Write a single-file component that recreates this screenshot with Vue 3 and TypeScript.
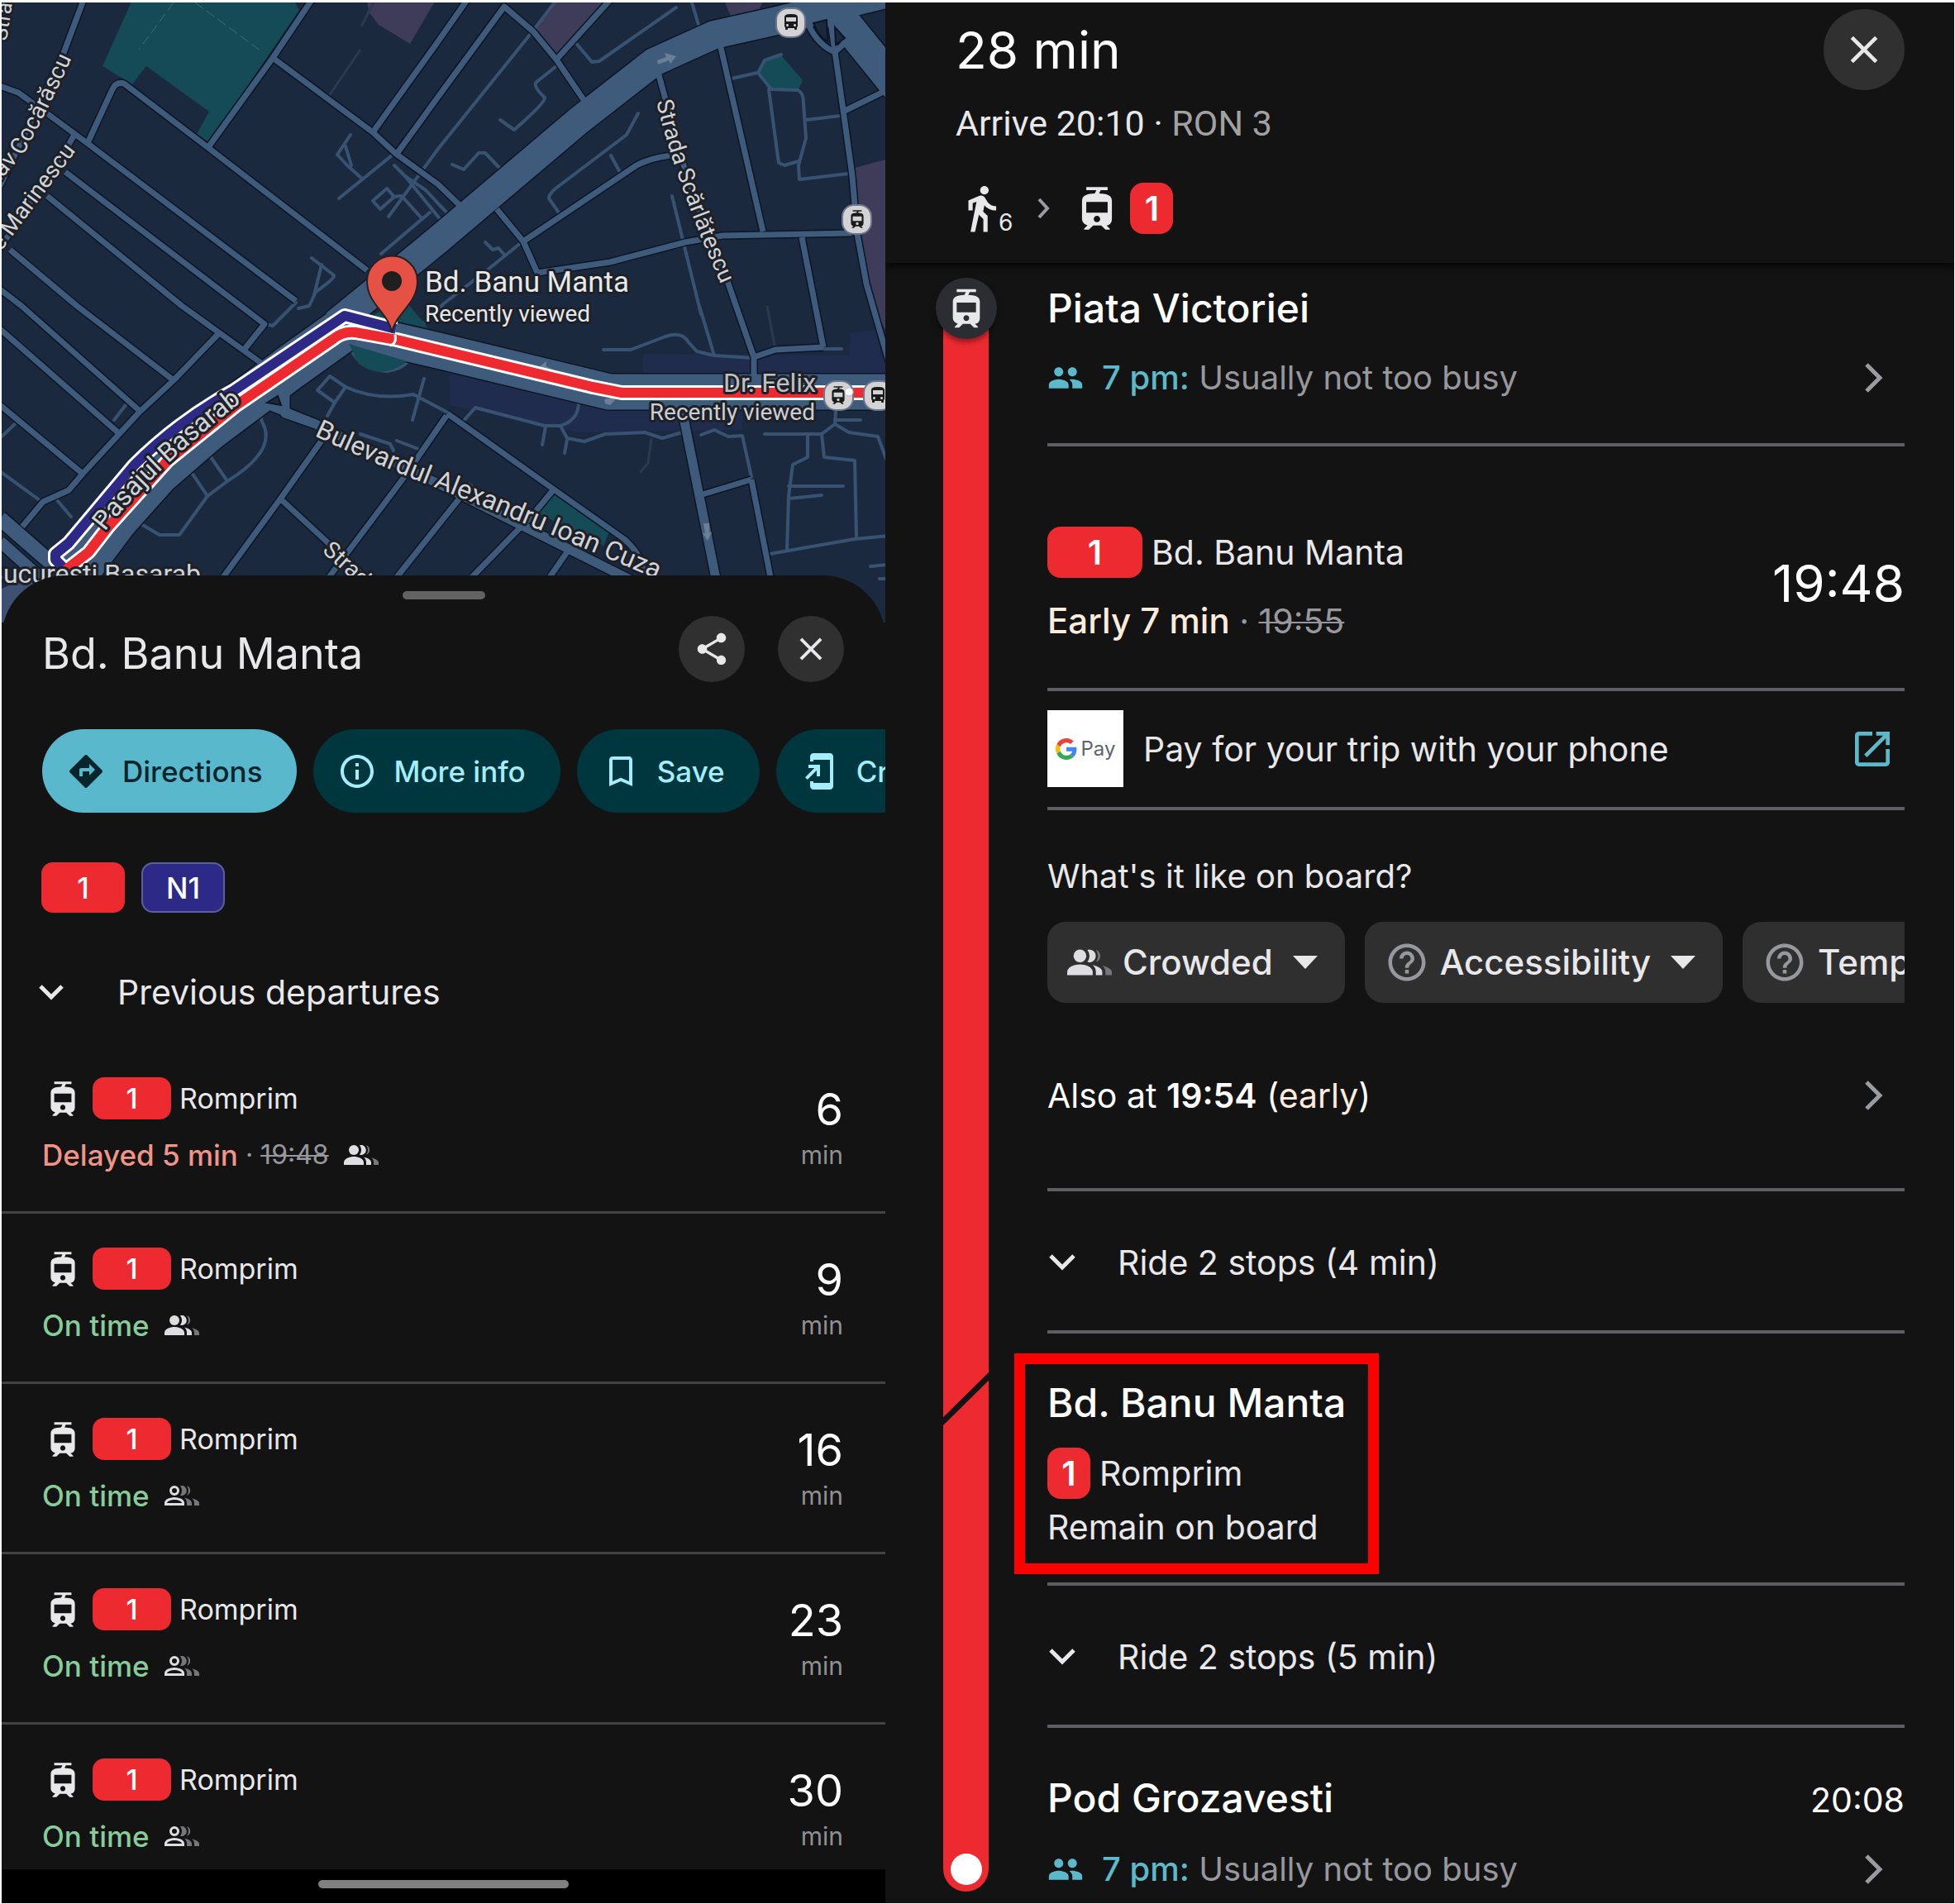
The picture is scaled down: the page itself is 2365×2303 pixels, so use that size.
<script setup lang="ts">
interface Departure {
  line: string
  headsign: string
  status: string
  late: boolean
  scheduled?: string
  crowded: boolean
  minutes: number
}

interface Action {
  label: string
  icon: string
  primary?: boolean
}

const icons = {
  tram: 'M19 16.94V8.5c0-2.79-2.61-3.4-6.01-3.49l.76-1.51H17V2H7v1.5h4.75l-.76 1.52C7.86 5.11 5 5.73 5 8.5v8.44c0 1.45 1.19 2.66 2.59 2.97L6 21.5v.5h2.23l2-2H14l2 2h2v-.5L16.5 20h-.08c1.69 0 2.58-1.37 2.58-3.06zm-7 1.56c-.83 0-1.5-.67-1.5-1.5s.67-1.5 1.5-1.5 1.5.67 1.5 1.5-.67 1.5-1.5 1.5zm5-4.5H7V9h10v5z',
  bus: 'M4 16c0 .88.39 1.67 1 2.22V20c0 .55.45 1 1 1h1c.55 0 1-.45 1-1v-1h8v1c0 .55.45 1 1 1h1c.55 0 1-.45 1-1v-1.78c.61-.55 1-1.34 1-2.22V6c0-3.5-3.58-4-8-4s-8 .5-8 4v10zm3.5 1c-.83 0-1.5-.67-1.5-1.5S6.67 14 7.500 14s1.500.67 1.500 1.500S8.330 17 7.500 17zm9 0c-.83 0-1.500-.67-1.500-1.500s.67-1.500 1.500-1.500 1.500.67 1.500 1.500-.67 1.500-1.500 1.500zm1.500-6H6V6h12v5z',
  walk: 'M13.5 5.5c1.1 0 2-.9 2-2s-.9-2-2-2-2 .9-2 2 .9 2 2 2zM9.8 8.9L7 23h2.1l1.800-8 2.100 2v6h2v-7.500l-2.100-2 .6-3C14.800 12 16.800 13 19 13v-2c-1.900 0-3.500-1-4.300-2.400l-1-1.600c-.4-.6-1-1-1.700-1-.3 0-.5.1-.8.1L6 8.300V13h2V9.600l1.800-.7',
  share: 'M18 16.08c-.76 0-1.44.3-1.96.77L8.91 12.7c.05-.23.09-.46.09-.7s-.04-.47-.09-.7l7.05-4.11c.54.5 1.25.81 2.04.81 1.66 0 3-1.34 3-3s-1.34-3-3-3-3 1.34-3 3c0 .24.04.47.09.7L8.04 9.81C7.5 9.31 6.79 9 6 9c-1.66 0-3 1.34-3 3s1.34 3 3 3c.79 0 1.5-.31 2.04-.81l7.12 4.16c-.05.21-.08.43-.08.65 0 1.61 1.31 2.92 2.92 2.92 1.61 0 2.92-1.31 2.92-2.92s-1.31-2.92-2.92-2.92z',
  close: 'M19 6.41L17.59 5 12 10.59 6.41 5 5 6.41 10.59 12 5 17.59 6.41 19 12 13.41 17.59 19 19 17.59 13.41 12z',
  directions: 'M21.71 11.29l-9-9c-.39-.39-1.02-.39-1.41 0l-9 9c-.39.39-.39 1.02 0 1.41l9 9c.39.39 1.02.39 1.41 0l9-9c.39-.38.39-1.01 0-1.41zM14 14.5V12h-4v3H8v-4c0-.55.45-1 1-1h5V7.5l3.5 3.5-3.5 3.5z',
  info: 'M11 7h2v2h-2zm0 4h2v6h-2zm1-9C6.48 2 2 6.48 2 12s4.48 10 10 10 10-4.48 10-10S17.52 2 12 2zm0 18c-4.41 0-8-3.59-8-8s3.59-8 8-8 8 3.59 8 8-3.59 8-8 8z',
  bookmark: 'M17 3H7c-1.1 0-2 .9-2 2v16l7-3 7 3V5c0-1.1-.9-2-2-2zm0 15l-5-2.18L7 18V5h10v13z',
  shortcut: 'M18 1.01L8 1c-1.1 0-2 .9-2 2v3h2V5h10v14H8v-1H6v3c0 1.1.9 2 2 2h10c1.1 0 2-.9 2-2V3c0-1.1-.9-1.99-2-1.99zM10 15h2V8H5v2h3.59L3 15.59 4.41 17 10 11.41z',
  open: 'M19 19H5V5h7V3H5c-1.11 0-2 .9-2 2v14c0 1.1.89 2 2 2h14c1.1 0 2-.9 2-2v-7h-2v7zM14 3v2h3.59l-9.83 9.83 1.41 1.41L19 6.41V10h2V3h-7z',
  help: 'M11 18h2v-2h-2v2zm1-16C6.48 2 2 6.48 2 12s4.48 10 10 10 10-4.48 10-10S17.52 2 12 2zm0 18c-4.41 0-8-3.59-8-8s3.59-8 8-8 8 3.59 8 8-3.59 8-8 8zm0-14c-2.21 0-4 1.79-4 4h2c0-1.1.9-2 2-2s2 .9 2 2c0 2-3 1.75-3 5h2c0-2.25 3-2.5 3-5 0-2.21-1.79-4-4-4z',
  people: 'M16.500 11c1.660 0 2.990-1.340 2.990-3S18.160 5 16.500 5s-3 1.340-3 3 1.340 3 3 3zm-9 0c1.660 0 2.990-1.340 2.990-3S9.160 5 7.500 5s-3 1.340-3 3 1.340 3 3 3zm0 2c-2.330 0-6.500 1.170-6.500 3.500V19h13v-2.500c0-2.330-4.170-3.500-6.500-3.500zm9 0c-.6 0-1.300.08-2 .22 1.200.84 2 1.900 2 3.280V19h6.500v-2.500c0-2.330-4.170-3.500-6.500-3.500z',
}

const actions: Action[] = [
  { label: 'Directions', icon: icons.directions, primary: true },
  { label: 'More info', icon: icons.info },
  { label: 'Save', icon: icons.bookmark },
  { label: 'Create', icon: icons.shortcut },
]

const departures: Departure[] = [
  { line: '1', headsign: 'Romprim', status: 'Delayed 5 min', late: true, scheduled: '19:48', crowded: true, minutes: 6 },
  { line: '1', headsign: 'Romprim', status: 'On time', late: false, crowded: true, minutes: 9 },
  { line: '1', headsign: 'Romprim', status: 'On time', late: false, crowded: false, minutes: 16 },
  { line: '1', headsign: 'Romprim', status: 'On time', late: false, crowded: false, minutes: 23 },
  { line: '1', headsign: 'Romprim', status: 'On time', late: false, crowded: false, minutes: 30 },
]

// Streets with a dark casing
const streets = [
  'M101 0L77 64L0 225',
  'M0 104L22 112L58 138L108 175L358 364',
  'M106 173L135 110Q140 98 150 101L251 178L444 327',
  'M377 0L330 70L252 178',
  'M330 70L451 160L479 186L530 223L558 250',
  'M451 160L530 50L565 0',
  'M480 186L530 117L610 8L645 38L673 72L709 125',
  'M79 208L320 392L296 422',
  'M57 237L220 370L320 442',
  'M12 302L93 370L210 460',
  'M0 350L26 370L169 497',
  'M0 398L145 525',
  'M0 490L100 573',
  'M265 403L210 460L169 498L100 573L83 593L52 607L27 637',
  'M90 163L80 180L0 300',
  'M738 0L673 72',
  'M796 87L805 120Q825 210 881 343L912 432L912 455',
  'M912 432L938 423L996 420',
  'M970 287L996 420',
  'M1004 20L1020 133L1031 213L1037 283L1048 343L1075 437',
  'M978 30Q990 55 1010 63L1027 47',
  'M1020 135L1075 108',
  'M871 53L923 280',
  'M650 330L738 317L829 293L874 285L1030 282',
  'M601 253L633 292L650 330',
  'M633 292L770 200Q787 191 812 188',
  'M541 500L670 592L755 652Q778 672 779 695',
  'M540 503L489 577L398 698',
  'M389 533L338 605L270 698',
  'M341 605L460 715',
  'M570 585L480 698',
  'M669 593L645 622L571 698',
  'M690 662L665 698',
  'M909 580L932 698',
  'M850 598L909 580',
]

// Alleys and footways, thin and without casing
const alleys = [
  'M0 530L21 510', 'M138 508L152 490', 'M0 570L52 608', 'M69 605L86 625',
  'M846 370L864 430', 'M813 237L848 380',
  'M825 523L801 530L780 523L732 525L707 534L686 530L678 515Q700 508 700 487',
  'M560 510L575 493L659 515H678', 'M660 516L656 538', 'M686 532L683 548',
  'M730 423H763L805 407Q825 400 833 414L843 425L864 430L912 433',
  'M678 260L664 240Q664 235 672 228L758 163L772 137',
  'M739 188L752 212', 'M631 293L589 327L537 367L512 392', 'M587 293L596 302L603 300L610 308',
  'M673 0L645 37L530 180L470 262', 'M673 80L648 100Q646 106 659 118Q660 124 622 157L605 145',
  'M695 50L716 75L725 74L818 9', 'M608 207L587 185H579L561 205L547 199', 'M836 0L846 33',
  'M945 66L925 73L917 88L933 108L965 109Q972 112 972 125L975 167L966 200L967 217L1027 210',
  'M930 108L942 197L949 200L966 195', 'M885 95L916 88', 'M975 145L1017 140',
  'M399 455L384 472L405 487L418 468Z', 'M418 468Q455 485 500 477L540 498', 'M405 487L396 503',
  'M513 458L499 508', 'M324 495Q312 503 318 512Q335 545 275 582L251 600L217 647H193L164 630',
  'M251 547L275 582', 'M226 563L251 600', 'M436 525L472 537L476 545', 'M480 533L506 543',
  'M424 163L408 187L420 200L439 217', 'M410 240L474 188', 'M418 177L425 200',
  'M477 200L490 213L534 267', 'M490 213L515 230L545 262', 'M451 243L468 228L477 238L460 253Z',
  'M475 238L486 237L511 265', 'M461 307L520 257', 'M377 312L404 333Q406 336 382 353L374 370L361 373',
  'M389 320L380 357', 'M358 366L330 394L320 392', 'M1011 498L1010 513L994 525H925', 'M1010 508H1041',
  'M1010 513L1027 523L1062 528L1072 555', 'M977 525V553L959 562L954 600L952 665',
  'M994 525L997 553L1034 557L1036 650', 'M954 588H1020', 'M954 603L994 599',
  'M931 670L1034 652L1075 648', 'M1053 685L1075 683', 'M1064 700H1075', 'M909 577L898 527L881 528L864 520L848 526',
  'M422 415Q430 445 468 449Q485 447 494 437', 'M530 0L545 0', 'M996 422H1018',
]

const boulevards = [
  { d: 'M413 400L350 445L250 520L190 572L140 628L86 700', w: 54 },
  { d: 'M413 397L530 424L737 474H1075', w: 43 },
  { d: 'M405 392L530 290L700 146L791 75L864 42L940 25L1075 -8', w: 34 },
  { d: 'M1000 0L1085 105', w: 38 },
  { d: 'M318 487L382 513L530 585L690 665L780 710', w: 11 },
  { d: 'M345 450V500L382 513', w: 11 },
  { d: 'M826 500L866 700', w: 11 },
  { d: 'M0 627L70 688', w: 18 },
  { d: 'M0 655L50 700', w: 14 },
]

const redRoute = 'M1075 475H752L717 468L480 411L430 402Q415 400 403 410L286 490L203 557L131 637L107 668L76 692'
const blueRoute = 'M479 398L417 382L282 473Q215 510 162 563L83 657L67 670V677L80 690'
</script>

<template>
  <main class="page">
    <section class="place">
      <svg class="map" viewBox="2 3 1069 750" role="img" aria-label="Map">
        <rect width="1080" height="760" fill="#1b293f" />
        <g fill="#154a57">
          <path d="M160 0H355L362 12L253 172L238 162L253 135L177 80L160 102L124 80Z" />
          <path d="M945 67L971 97L966 108L933 110L918 88L923 73Z" />
          <path d="M671 597L737 643L730 660L650 620Z" />
        </g>
        <g fill="#3e3c58">
          <path d="M673 0H738L672 66L645 37Z" />
          <path d="M444 0H527L496 53L458 30L446 14Z" />
          <path d="M876 0H924L918 12L884 20Z" />
          <path d="M1034 203L1075 192V410L1062 380L1044 317Z" />
        </g>
        <g fill="#202c4d">
          <path d="M778 428L1027 430L1029 403L1075 397V455H778Z" />
          <path d="M544 450L735 497L898 495V520L700 523L544 490Z" />
        </g>
        <g stroke="#3f6f78" fill="none" stroke-width="1" stroke-dasharray="12 5">
          <path d="M210 3L168 60" />
          <path d="M236 3L316 62" />
        </g>
        <g stroke="#2a3a50" fill="none" stroke-width="3">
          <path d="M452 3L437 32M436 60L398 116M788 530L784 560L774 572M928 370L938 423" />
        </g>
        <g fill="none" stroke="#385371" stroke-width="4" stroke-linejoin="round" stroke-linecap="round">
          <path v-for="d in alleys" :key="d" :d="d" />
        </g>
        <g fill="none" stroke="#0c1524" stroke-linejoin="round">
          <path v-for="d in streets" :key="d" :d="d" stroke-width="10" />
          <path v-for="b in boulevards" :key="b.d" :d="b.d" :stroke-width="b.w + 3" />
        </g>
        <g fill="none" stroke="#3f5b7b" stroke-linejoin="round">
          <path v-for="d in streets" :key="d" :d="d" stroke-width="7" />
          <path v-for="b in boulevards" :key="b.d" :d="b.d" :stroke-width="b.w" />
        </g>
        <path d="M2 760V712L50 690L90 760Z" fill="#3f5173" />
        <path d="M323 487L336 479L340 490Z" fill="#1b293f" stroke="#0c1524" stroke-width="2" />
        <path d="M984 28L1000 24L1001 50Q990 44 984 28Z" fill="#1b293f" stroke="#0c1524" stroke-width="2" />
        <path d="M1010 33L1022 46L1011 54Z" fill="#1b293f" stroke="#0c1524" stroke-width="2" />
        <path d="M422 416L492 437Q462 461 434 440Z" fill="#154a57" />
        <path d="M451 382L472 368H494L518 397Z" fill="#154a57" />
        <g fill="#6b7f95">
          <path d="M795 73L806 69L804 64L818 68L811 77L809 73L796 78Z" />
          <path d="M648 447L661 437V443L672 449L660 450Z" />
          <path d="M731 483L743 480V475L744 484L738 490L732 488Z" />
          <path d="M851 633H858V644H861L856 654L850 645H853Z" />
        </g>

        <g fill="none" stroke-linejoin="round">
          <path :d="blueRoute" stroke="#fff" stroke-width="18" />
          <path :d="redRoute" stroke="#fff" stroke-width="18" />
          <path :d="blueRoute" stroke="#2c2a86" stroke-width="12" />
          <path :d="redRoute" stroke="#ee2a31" stroke-width="12" />
          <path d="M472 418Q480 416 478 405" stroke="#fff" stroke-width="3" />
        </g>

        <g class="station">
          <rect x="939" y="10" width="35" height="35" rx="14" />
          <svg x="945" y="15" width="24" height="24" viewBox="0 0 24 24"><path :d="icons.bus" /></svg>
          <rect x="1019" y="248" width="35" height="35" rx="14" />
          <svg x="1024" y="252" width="26" height="26" viewBox="0 0 24 24"><path :d="icons.tram" /></svg>
          <rect x="997" y="461" width="35" height="35" rx="14" />
          <svg x="1001" y="465" width="26" height="26" viewBox="0 0 24 24"><path :d="icons.tram" /></svg>
          <circle cx="1027" cy="474" r="5" fill="#fff" stroke="#bbb" />
          <rect x="1045" y="461" width="35" height="35" rx="14" />
          <svg x="1050" y="466" width="24" height="24" viewBox="0 0 24 24"><path :d="icons.bus" /></svg>
        </g>

        <defs>
          <path id="way-cocarascu" d="M-152 396L30 184Q54 141 87 70" />
          <path id="way-marinescu" d="M-120 470L25 272L92 182" />
          <path id="way-strada" d="M8 50L24 -60" />
          <path id="way-scarlatescu" d="M794 123Q818 225 886 375" />
          <path id="way-pasajul" d="M127 643Q195 555 340 450" />
          <path id="way-cuza" d="M380 527Q455 562 530 591T860 728" />
          <path id="way-south" d="M389 667L480 750" />
        </defs>
        <g class="street-name">
          <text font-size="28"><textPath href="#way-cocarascu" startOffset="100%" text-anchor="end">Gustav Cocărăscu</textPath></text>
          <text font-size="28"><textPath href="#way-marinescu" startOffset="100%" text-anchor="end">Vasile Marinescu</textPath></text>
          <text font-size="26"><textPath href="#way-strada">Strada</textPath></text>
          <text font-size="28"><textPath href="#way-scarlatescu">Strada Scărlătescu</textPath></text>
          <text font-size="32"><textPath href="#way-pasajul">Pasajul Basarab</textPath></text>
          <text font-size="32"><textPath href="#way-cuza">Bulevardul Alexandru Ioan Cuza</textPath></text>
          <text font-size="28"><textPath href="#way-south">Strada</textPath></text>
          <text x="243" y="705" font-size="32" text-anchor="end">București Basarab</text>
        </g>
        <g class="place-name">
          <text x="514" y="353" font-size="35">Bd. Banu Manta</text>
          <text x="514" y="389" font-size="28">Recently viewed</text>
          <text x="987" y="474" font-size="32" text-anchor="end" fill="#bfc0c3">Dr. Felix</text>
          <text x="986" y="508" font-size="28" text-anchor="end" fill="#cdced1">Recently viewed</text>
        </g>
        <path
          d="M474 402C470 378 444 368 444 340A30 30 0 0 1 505 340C505 368 479 378 474 402Z"
          fill="#e55144"
          stroke="#222"
          stroke-width="2"
        />
        <circle cx="474" cy="340" r="12" fill="#1f1f1f" />
      </svg>

      <div class="sheet">
        <span class="handle"></span>
        <header class="sheet-head">
          <h1>Bd. Banu Manta</h1>
          <button class="round" type="button" aria-label="Share">
            <svg width="46" height="46" viewBox="0 0 24 24"><path :d="icons.share" /></svg>
          </button>
          <button class="round" type="button" aria-label="Close">
            <svg width="46" height="46" viewBox="0 0 24 24"><path :d="icons.close" /></svg>
          </button>
        </header>

        <div class="actions">
          <button v-for="a in actions" :key="a.label" type="button" :class="['action', { primary: a.primary }]">
            <svg width="48" height="48" viewBox="0 0 24 24"><path :d="a.icon" /></svg>
            {{ a.label }}
          </button>
        </div>

        <div class="lines">
          <span class="badge wide">1</span>
          <span class="badge wide night">N1</span>
        </div>

        <button class="previous" type="button">
          <svg width="32" height="20" viewBox="0 0 32 20"><path d="M3 3L16 16L29 3" /></svg>
          Previous departures
        </button>

        <ul class="departures">
          <li v-for="(d, i) in departures" :key="i">
            <div class="trip">
              <div class="trip-line">
                <svg width="50" height="50" viewBox="0 0 24 24"><path :d="icons.tram" /></svg>
                <span class="badge row">{{ d.line }}</span>
                <span>{{ d.headsign }}</span>
              </div>
              <div class="trip-status">
                <span :class="d.late ? 'late' : 'ontime'">{{ d.status }}</span>
                <span v-if="d.scheduled" class="muted">&nbsp;·&nbsp;<s>{{ d.scheduled }}</s></span>
                <svg v-if="d.crowded" class="crowd" width="42" height="24" viewBox="0 0 42 24">
                  <g fill="#dedee2">
                    <circle cx="12" cy="6" r="6" />
                    <path d="M0 24V21C0 16.500 7 14 12 14S24 16.500 24 21V24Z" />
                    <path d="M19 .3A6 6 0 1 1 19 11.700A9 9 0 0 0 19 .3Z" />
                    <path d="M24 14.600C28 15.600 33 17.600 33 21V24H27V21C27 18.300 25.800 16.200 24 14.600Z" />
                  </g>
                  <g fill="#77777b">
                    <path d="M27 .3A6 6 0 0 1 27 11.700A9 9 0 0 0 27 .3Z" />
                    <path d="M33 15.200C37 16.400 42 18.200 42 21V24H36V21C36 18.600 35 16.600 33 15.200Z" />
                  </g>
                </svg>
                <svg v-else class="crowd" width="42" height="24" viewBox="0 0 42 24">
                  <g fill="none" stroke="#dedee2" stroke-width="3">
                    <circle cx="12" cy="6" r="4.500" />
                    <path d="M1.500 22.500V21C1.500 17.500 8 15.500 12 15.500S22.500 17.500 22.500 21V22.500Z" />
                  </g>
                  <g fill="#77777b">
                    <path d="M19 .3A6 6 0 1 1 19 11.700A9 9 0 0 0 19 .3Z" />
                    <path d="M27 .3A6 6 0 0 1 27 11.700A9 9 0 0 0 27 .3Z" />
                    <path d="M24 14.600C28 15.600 33 17.600 33 21V24H27V21C27 18.300 25.800 16.200 24 14.600Z" />
                    <path d="M33 15.200C37 16.400 42 18.200 42 21V24H36V21C36 18.600 35 16.600 33 15.200Z" />
                  </g>
                </svg>
              </div>
            </div>
            <div class="wait"><strong>{{ d.minutes }}</strong><span>min</span></div>
          </li>
        </ul>
      </div>
      <div class="navbar"><span></span></div>
    </section>

    <section class="route">
      <header class="route-head">
        <div class="summary">
          <h2>28 min</h2>
          <p class="arrive">Arrive 20:10 · <span>RON 3</span></p>
          <div class="steps">
            <svg width="62" height="62" viewBox="0 0 24 24"><path :d="icons.walk" /></svg>
            <small>6</small>
            <svg class="next" width="16" height="26" viewBox="0 0 16 26"><path d="M3 2L13 13L3 24" /></svg>
            <svg class="vehicle" width="62" height="62" viewBox="0 0 24 24"><path :d="icons.tram" /></svg>
            <span class="badge small">1</span>
          </div>
        </div>
        <button class="round large" type="button" aria-label="Close">
          <svg width="56" height="56" viewBox="0 0 24 24"><path :d="icons.close" /></svg>
        </button>
      </header>

      <div class="itinerary">
        <div class="rail">
          <span class="node">
            <svg width="56" height="56" viewBox="0 0 24 24"><path :d="icons.tram" /></svg>
          </span>
          <span class="end"></span>
        </div>

        <div class="legs">
          <section class="stop">
            <h3>Piata Victoriei</h3>
            <a class="busy" href="#">
              <svg width="44" height="44" viewBox="0 0 24 24"><path :d="icons.people" /></svg>
              <span><b>7 pm:</b> Usually not too busy</span>
              <svg class="chev" width="24" height="38" viewBox="0 0 24 38"><path d="M3 3L19 19L3 35" /></svg>
            </a>
          </section>

          <section class="ride">
            <div>
              <p class="with-badge"><span class="badge board">1</span>Bd. Banu Manta</p>
              <p class="early"><b>Early 7 min</b><span class="muted"> · <s>19:55</s></span></p>
            </div>
            <time>19:48</time>
          </section>

          <section>
            <a class="pay" href="#">
              <span class="gpay">
                <svg width="26" height="26" viewBox="0 0 48 48">
                  <path fill="#EA4335" d="M24 9.5c3.54 0 6.71 1.22 9.21 3.6l6.85-6.85C35.9 2.38 30.47 0 24 0 14.62 0 6.51 5.38 2.56 13.22l7.98 6.19C12.43 13.72 17.74 9.5 24 9.5z" />
                  <path fill="#4285F4" d="M46.98 24.55c0-1.57-.15-3.09-.38-4.55H24v9.02h12.94c-.58 2.96-2.26 5.48-4.78 7.18l7.73 6c4.51-4.18 7.09-10.36 7.09-17.65z" />
                  <path fill="#FBBC05" d="M10.53 28.59c-.48-1.45-.76-2.99-.76-4.59s.27-3.14.76-4.59l-7.98-6.19C.92 16.46 0 20.12 0 24c0 3.88.92 7.54 2.56 10.78l7.97-6.19z" />
                  <path fill="#34A853" d="M24 48c6.48 0 11.93-2.13 15.89-5.81l-7.73-6c-2.15 1.45-4.92 2.3-8.16 2.3-6.26 0-11.57-4.22-13.47-9.91l-7.98 6.19C6.51 42.62 14.62 48 24 48z" />
                </svg>
                Pay
              </span>
              <span>Pay for your trip with your phone</span>
              <svg class="open" width="56" height="56" viewBox="0 0 24 24"><path :d="icons.open" /></svg>
            </a>
          </section>

          <section class="board-info">
            <p class="question">What's it like on board?</p>
            <div class="filters">
              <button type="button">
                <svg class="lead" width="54" height="32" viewBox="0 0 42 24">
                  <g fill="#dedee2">
                    <circle cx="12" cy="6" r="6" />
                    <path d="M0 24V21C0 16.500 7 14 12 14S24 16.500 24 21V24Z" />
                    <path d="M19 .3A6 6 0 1 1 19 11.700A9 9 0 0 0 19 .3Z" />
                    <path d="M24 14.600C28 15.600 33 17.600 33 21V24H27V21C27 18.300 25.800 16.200 24 14.600Z" />
                  </g>
                  <g fill="#77777b">
                    <path d="M27 .3A6 6 0 0 1 27 11.700A9 9 0 0 0 27 .3Z" />
                    <path d="M33 15.200C37 16.400 42 18.200 42 21V24H36V21C36 18.600 35 16.600 33 15.200Z" />
                  </g>
                </svg>
                Crowded
                <svg class="caret" width="30" height="16" viewBox="0 0 30 16"><path d="M0 0H30L15 16Z" /></svg>
              </button>
              <button type="button">
                <svg class="lead ask" width="54" height="54" viewBox="0 0 24 24"><path :d="icons.help" /></svg>
                Accessibility
                <svg class="caret" width="30" height="16" viewBox="0 0 30 16"><path d="M0 0H30L15 16Z" /></svg>
              </button>
              <button type="button">
                <svg class="lead ask" width="54" height="54" viewBox="0 0 24 24"><path :d="icons.help" /></svg>
                Temperature
                <svg class="caret" width="30" height="16" viewBox="0 0 30 16"><path d="M0 0H30L15 16Z" /></svg>
              </button>
            </div>
            <a class="also" href="#">
              <span>Also at <b>19:54</b> (<i>early</i>)</span>
              <svg class="chev" width="24" height="38" viewBox="0 0 24 38"><path d="M3 3L19 19L3 35" /></svg>
            </a>
          </section>

          <section>
            <button class="stops" type="button">
              <svg width="36" height="24" viewBox="0 0 36 24"><path d="M4 4L18 18L32 4" /></svg>
              Ride 2 stops (4 min)
            </button>
          </section>

          <section class="transfer">
            <svg class="cut" width="55" height="66" viewBox="0 0 55 66"><path d="M-4 64L59 2" /></svg>
            <div class="marked">
              <h3>Bd. Banu Manta</h3>
              <p class="with-badge"><span class="badge small">1</span>Romprim</p>
              <p>Remain on board</p>
            </div>
          </section>

          <section>
            <button class="stops" type="button">
              <svg width="36" height="24" viewBox="0 0 36 24"><path d="M4 4L18 18L32 4" /></svg>
              Ride 2 stops (5 min)
            </button>
          </section>

          <section class="stop last">
            <h3>Pod Grozavesti <time>20:08</time></h3>
            <a class="busy" href="#">
              <svg width="44" height="44" viewBox="0 0 24 24"><path :d="icons.people" /></svg>
              <span><b>7 pm:</b> Usually not too busy</span>
              <svg class="chev" width="24" height="38" viewBox="0 0 24 38"><path d="M3 3L19 19L3 35" /></svg>
            </a>
          </section>
        </div>
      </div>
    </section>
  </main>
</template>

<style>
body {
  margin: 0;
  background: #fdfdfd;
}
</style>

<style scoped>
.page {
  display: grid;
  grid-template-columns: minmax(0, 1069fr) minmax(0, 1293fr);
  padding: 3px 1px 3px 2px;
  background: #fdfdfd;
  color: #e8e8ea;
  font: 400 41px/48px Inter, Roboto, sans-serif;
}
h1, h2, h3, p, ul {
  margin: 0;
  padding: 0;
  font-weight: 400;
}
svg {
  display: block;
  flex: none;
  fill: currentColor;
}
button {
  border: 0;
  padding: 0;
  background: none;
  color: inherit;
  font: inherit;
  text-align: left;
  white-space: nowrap;
}
a {
  color: inherit;
  text-decoration: none;
}
b {
  font-weight: 500;
}
s {
  text-decoration-thickness: 2px;
}
.muted {
  color: #97989d;
}

/* map */
.place {
  display: flex;
  flex-direction: column;
  background: #131313;
  overflow: hidden;
}
.map {
  width: 100%;
  height: auto;
}
.station rect {
  fill: #d3d3d6;
  stroke: #6f7689;
  stroke-width: 2;
}
.station path {
  fill: #1a1a1a;
}
.street-name,
.place-name {
  font-family: Roboto, sans-serif;
  fill: #d0d3d8;
  stroke: #1d2127;
  stroke-width: 6px;
  stroke-linejoin: round;
  paint-order: stroke;
}
.place-name {
  fill: #e6e8ea;
}

/* place sheet */
.sheet {
  position: relative;
  flex: 1;
  margin-top: -57px;
  padding-top: 19px;
  border-radius: 76px 76px 0 0;
  background: #131313;
}
.handle {
  display: block;
  width: 100px;
  height: 10px;
  margin: 0 auto;
  border-radius: 5px;
  background: #626262;
}
.sheet-head {
  display: flex;
  align-items: center;
  gap: 40px;
  margin: 20px 50px 0 49px;
}
.sheet-head h1 {
  flex: 1;
  padding-top: 12px;
  font-size: 52px;
  line-height: 60px;
}
.round {
  display: flex;
  align-items: center;
  justify-content: center;
  width: 80px;
  height: 80px;
  border-radius: 50%;
  background: #303030;
}
.round.large {
  width: 98px;
  height: 98px;
}
.actions {
  display: flex;
  gap: 20px;
  margin: 57px 0 0 49px;
  overflow: hidden;
}
.action {
  display: flex;
  flex: none;
  align-items: center;
  gap: 20px;
  height: 101px;
  padding: 0 42px 0 29px;
  border-radius: 51px;
  background: #00363d;
  color: #a4eefb;
  font-size: 35px;
  font-weight: 500;
}
.action.primary {
  background: #59b8cb;
  color: #06262c;
}
.lines {
  display: flex;
  gap: 20px;
  margin: 60px 0 0 48px;
}
.badge {
  display: inline-flex;
  flex: none;
  align-items: center;
  justify-content: center;
  box-sizing: border-box;
  height: 62px;
  border-radius: 16px;
  background: #ee2a31;
  color: #fff;
  font-weight: 600;
}
.badge.wide {
  width: 101px;
  height: 61px;
  border-radius: 14px;
  font-size: 35px;
  font-weight: 500;
}
.badge.night {
  border: 2px solid #5e5e9c;
  background: #2c2a86;
}
.badge.row {
  width: 95px;
  height: 51px;
  border-radius: 14px;
  font-weight: 500;
}
.badge.small {
  width: 52px;
}
.badge.board {
  width: 115px;
}
.previous {
  display: flex;
  align-items: center;
  gap: 64px;
  margin: 72px 0 0 44px;
}
.previous svg,
.stops svg {
  fill: none;
  stroke: currentColor;
  stroke-width: 5px;
}
.departures {
  margin-top: 38px;
  list-style: none;
  font-size: 34px;
}
.departures li {
  display: flex;
  justify-content: space-between;
  padding: 41px 51px 44px 49px;
  border-bottom: 3px solid #434343;
}
.departures li:last-child {
  padding-bottom: 0;
  border-bottom: 0;
}
.trip-line {
  display: flex;
  align-items: center;
  height: 51px;
}
.trip-line .badge {
  margin: 0 10px 0 11px;
}
.trip-status {
  display: flex;
  align-items: center;
  margin-top: 19px;
}
.late,
.ontime {
  font-size: 35px;
  font-weight: 500;
}
.late {
  color: #f19488;
}
.ontime {
  color: #88cc9a;
}
.trip-status .muted {
  font-size: 32px;
}
.crowd {
  margin-left: 18px;
}
.wait {
  display: flex;
  flex-direction: column;
  align-items: flex-end;
  padding-top: 8px;
}
.wait strong {
  color: #fff;
  font-size: 54px;
  font-weight: 400;
  line-height: 62px;
}
.wait span {
  color: #909094;
  font-size: 30px;
}
.navbar {
  display: flex;
  justify-content: center;
  padding: 13px 0 18px;
  background: #000;
}
.navbar span {
  width: 303px;
  height: 10px;
  border-radius: 5px;
  background: #808080;
}

/* route */
.route {
  background: #131313;
  overflow: hidden;
}
.route-head {
  display: flex;
  justify-content: space-between;
  align-items: flex-start;
  padding: 8px 60px 35px 85px;
  box-shadow: 0 4px 8px 1px #080808;
}
.summary {
  padding-top: 14px;
}
.summary h2 {
  color: #fff;
  font-size: 62px;
  line-height: 72px;
}
.arrive {
  margin-top: 28px;
  font-family: Roboto, sans-serif;
  font-size: 43px;
}
.arrive span {
  color: #a1a1a1;
}
.steps {
  display: flex;
  align-items: center;
  margin-top: 48px;
}
.steps small {
  align-self: flex-end;
  margin-left: -10px;
  font-size: 28px;
  line-height: 28px;
}
.next {
  margin: 0 26px 0 29px;
}
.next,
.chev {
  fill: none;
  stroke: #9b9ca2;
  stroke-width: 4px;
}
.chev {
  margin: 0 25px 0 auto;
  stroke-width: 5px;
}
.vehicle {
  margin-right: 9px;
}
.itinerary {
  display: grid;
  grid-template-columns: 55px minmax(0, 1fr);
  gap: 71px;
  padding: 0 60px 17px 70px;
}
.rail {
  display: flex;
  flex-direction: column;
  align-items: center;
  justify-content: space-between;
  margin: 54px 0 -3px;
  border-radius: 0 0 28px 28px;
  background: #ee2a31;
}
.node {
  display: flex;
  align-items: center;
  justify-content: center;
  width: 74px;
  height: 74px;
  margin: -36px -10px 0;
  border-radius: 50%;
  background: #2c2d32;
  box-shadow: 0 4px 6px #0006;
}
.end {
  width: 38px;
  height: 38px;
  margin-bottom: 8px;
  border-radius: 50%;
  background: #fff;
}
.legs > section {
  border-bottom: 4px solid #5d5e62;
}
.legs > .last {
  border-bottom: 0;
}
.stop {
  padding: 25px 0 55px;
}
.stop.last {
  padding: 55px 0 0;
}
h3 {
  display: flex;
  align-items: baseline;
  justify-content: space-between;
  color: #fff;
  font-size: 48px;
  font-weight: 500;
  line-height: 60px;
}
h3 time {
  font-size: 41px;
  font-weight: 400;
}
.busy {
  display: flex;
  align-items: center;
  margin-top: 30px;
  color: #97989d;
  font-size: 40px;
}
.busy > svg:first-child {
  margin-right: 22px;
  color: #5cb9c9;
}
.busy b {
  color: #5cb9c9;
}
.ride {
  display: flex;
  align-items: center;
  justify-content: space-between;
  padding: 97px 0 57px;
}
.ride time {
  color: #fff;
  font-size: 62px;
}
.with-badge {
  display: flex;
  align-items: center;
  gap: 11px;
}
.early {
  margin-top: 28px;
  color: #fdebdc;
}
.early b {
  font-size: 42px;
}
.pay {
  display: flex;
  align-items: center;
  gap: 24px;
  padding: 23px 0 24px;
}
.gpay {
  display: flex;
  align-items: center;
  justify-content: center;
  gap: 5px;
  width: 92px;
  height: 93px;
  background: #fff;
  color: #5f6368;
  font-size: 24px;
}
.open {
  margin: 0 11px 0 auto;
  color: #5cb9c9;
}
.board-info {
  padding: 56px 0 88px;
}
.question {
  font-size: 40px;
}
.filters {
  display: flex;
  gap: 24px;
  margin: 31px 0 88px;
  overflow: hidden;
}
.filters button {
  display: flex;
  flex: none;
  align-items: center;
  height: 98px;
  padding: 0 33px 0 24px;
  border-radius: 22px;
  background: #2f2f2f;
  font-size: 42px;
  font-weight: 500;
}
.caret {
  margin-left: 24px;
}
.lead {
  margin-right: 13px;
}
.ask {
  color: #97989d;
}
.also {
  display: flex;
  align-items: center;
  color: #fff;
}
.also i {
  color: #fdebdc;
  font-style: normal;
}
.also b {
  font-weight: 600;
}
.stops {
  display: flex;
  align-items: center;
  gap: 49px;
  width: 100%;
  padding: 62px 0 58px;
}
.transfer {
  position: relative;
  padding: 54px 0 43px;
}
.cut {
  position: absolute;
  top: 46px;
  left: -126px;
  fill: none;
  stroke: #131313;
  stroke-width: 7px;
}
.marked {
  position: relative;
  width: fit-content;
}
.marked::after {
  content: "";
  position: absolute;
  inset: -30px -40px -33px -40px;
  border: 13px solid #f00;
}
.marked .with-badge {
  margin: 24px 0 10px;
}
</style>
